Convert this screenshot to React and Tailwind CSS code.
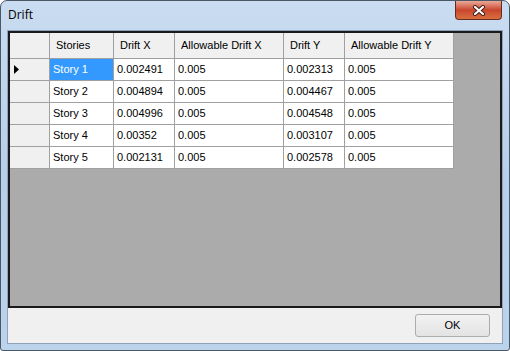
import React from "react";

const cols = [
  { key: "story", label: "Stories", w: "w-[64px]" },
  { key: "dx", label: "Drift X", w: "w-[61px]" },
  { key: "adx", label: "Allowable Drift X", w: "w-[109px]" },
  { key: "dy", label: "Drift Y", w: "w-[61px]" },
  { key: "ady", label: "Allowable Drift Y", w: "w-[109px]" },
];

const rows = [
  { story: "Story 1", dx: "0.002491", adx: "0.005", dy: "0.002313", ady: "0.005" },
  { story: "Story 2", dx: "0.004894", adx: "0.005", dy: "0.004467", ady: "0.005" },
  { story: "Story 3", dx: "0.004996", adx: "0.005", dy: "0.004548", ady: "0.005" },
  { story: "Story 4", dx: "0.00352", adx: "0.005", dy: "0.003107", ady: "0.005" },
  { story: "Story 5", dx: "0.002131", adx: "0.005", dy: "0.002578", ady: "0.005" },
];

export default function App() {
  return (
    <div className="w-[510px] h-[351px] bg-white">
      <div className="w-[510px] h-[351px] flex flex-col rounded-t-[7px] rounded-b-[3px] border border-[#4a5866] bg-gradient-to-b from-[#c9dcf1] via-[#b8cfe9] to-[#bcd3ec]">
        {/* title bar */}
        <div className="h-[29px] flex items-start justify-between pl-[7px] pr-[7px]">
          <div className="pt-[7px] text-[12px] leading-[14px] text-black" style={{ fontFamily: '"Open Sans", "Noto Sans", sans-serif' }}>
            Drift
          </div>
          <div className="w-[47px] h-[19px] rounded-b-[4px] border border-t-0 border-[#6a2a20] bg-gradient-to-b from-[#e9a899] via-[#c9452d] to-[#d7703f] flex items-center justify-center">
            <svg width="14" height="11" viewBox="0 0 14 11">
              <path d="M3 2 L11 9 M11 2 L3 9" stroke="#3a1a16" strokeWidth="4" strokeLinecap="round" />
              <path d="M3 2 L11 9 M11 2 L3 9" stroke="#ffffff" strokeWidth="2.2" strokeLinecap="round" />
            </svg>
          </div>
        </div>

        {/* client area */}
        <div className="mx-[6px] h-[314px] border border-[#8ea3bb] bg-[#f0f0f0] flex flex-col" style={{ fontFamily: '"Liberation Sans", Arial, sans-serif' }}>
          <div className="h-[277px] border-2 border-[#1a1a1a] bg-[#ababab] flex flex-col">
            {/* header */}
            <div className="flex h-[26px]">
              <div className="w-[40px] h-[26px] bg-[#f0f0f0] border-r border-b border-[#a0a0a0]" />
              {cols.map((c) => (
                <div
                  key={c.key}
                  className={`${c.w} h-[26px] bg-[#f0f0f0] border-r border-b border-[#a0a0a0] flex items-center pl-[6px] text-[11px] text-black`}
                >
                  {c.label}
                </div>
              ))}
            </div>
            {rows.map((r, i) => (
              <div key={r.story} className="flex h-[22px]">
                <div className="w-[40px] h-[22px] bg-[#f0f0f0] border-r border-b border-[#a0a0a0] flex items-center pl-[4px]">
                  {i === 0 && (
                    <svg width="6" height="9" viewBox="0 0 6 9">
                      <path d="M0 0 L5 4.5 L0 9 Z" fill="#000" />
                    </svg>
                  )}
                </div>
                {cols.map((c, j) => {
                  const sel = i === 0 && j === 0;
                  return (
                    <div
                      key={c.key}
                      className={`${c.w} h-[22px] border-r border-b border-[#a0a0a0] flex items-center pl-[3px] text-[11px] ${
                        sel ? "bg-[#3399ff] text-white" : "bg-white text-black"
                      }`}
                    >
                      {r[c.key]}
                    </div>
                  );
                })}
              </div>
            ))}
          </div>
          <div className="flex justify-end pt-[6px] pr-[12px]">
            <button className="w-[75px] h-[23px] rounded-[3px] border border-[#acacac] bg-gradient-to-b from-[#f2f2f2] to-[#e3e3e3] text-[11px] text-black">
              OK
            </button>
          </div>
        </div>
      </div>
    </div>
  );
}
